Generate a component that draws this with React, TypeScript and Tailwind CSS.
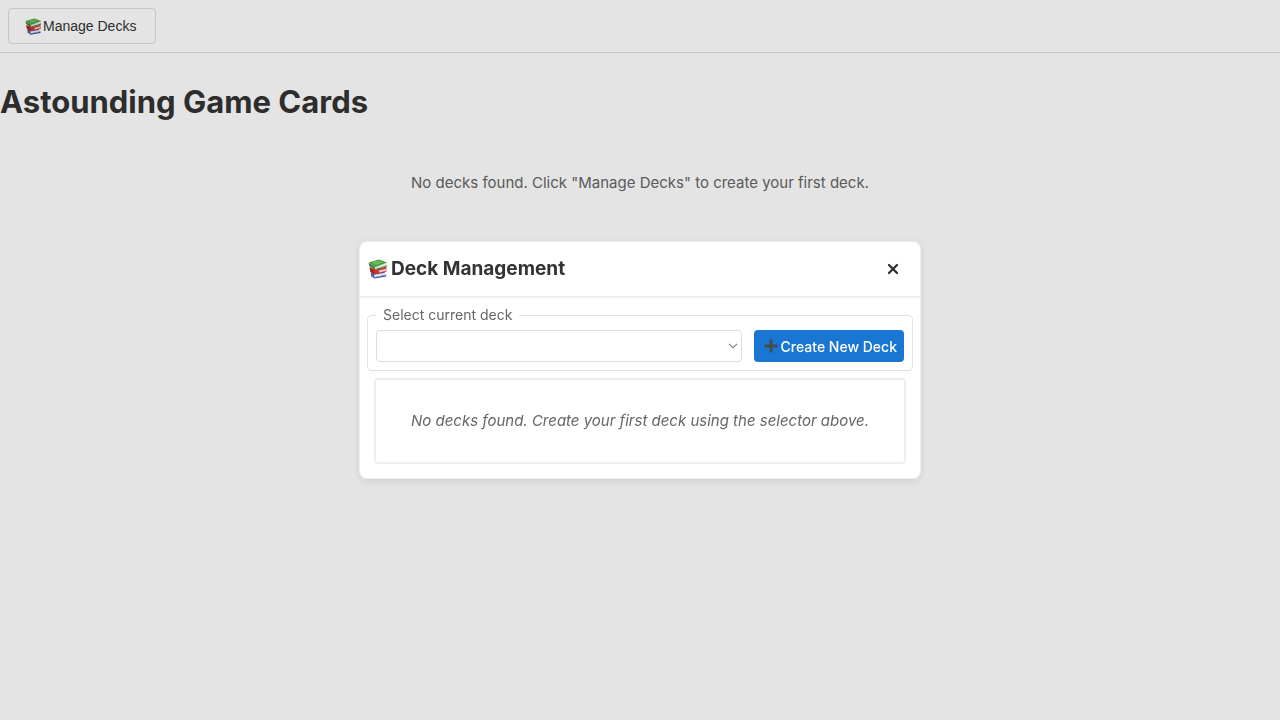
type IconProps = { className?: string };

function BooksIcon({ className }: IconProps) {
  return (
    <svg viewBox="0 0 20 20" className={className} aria-hidden="true">
      <path d="M2.6 13.4 L16 12.6 L18.2 16 L6.4 18.6 L3.2 16.6 Z" fill="#4a62a8" />
      <path d="M6 15.8 L17.8 13.8 L18.2 15.6 L6.6 18.2 Z" fill="#e4e4ea" />
      <path d="M3 16 L6.4 18.4 L18.2 16.2 L18.3 17.5 L6.5 19.6 L3 17.2 Z" fill="#3b5299" />
      <path d="M1.6 8.2 L8 10.4 L18.2 7.8 L18.6 12.6 L6.4 15.2 L2.2 12.6 Z" fill="#d5302a" />
      <path d="M1.6 8.6 L6 11.4 L6.4 15.2 L2.4 12.8 Z" fill="#a32622" />
      <path d="M11 11.4 L18 9.8 L18.3 11.8 L11.2 13.4 Z" fill="#dfcdd2" />
      <path d="M0.6 3.8 L6.8 8 L7.2 11 L1.4 7.2 Z" fill="#3c7a37" />
      <path d="M7 8 L18.8 4 L18.8 7 L7.4 10.6 Z" fill="#dfe5d8" />
      <path d="M0.6 3.6 L11 0.6 L19.2 3.6 L7.2 8.2 Z" fill="#4a9e40" />
      <path d="M3.6 3.6 L11 1.5 L15.6 3.2 L8 6 Z" fill="#6dba5e" />
      <path d="M7.2 10 L19 6.6 L19 7.5 L7.3 11 Z" fill="#377d33" />
    </svg>
  );
}

function PlusIcon({ className }: IconProps) {
  return (
    <svg viewBox="0 0 14 14" className={className} aria-hidden="true">
      <path d="M5.6 0.5 H8.4 V5.6 H13.5 V8.4 H8.4 V13.5 H5.6 V8.4 H0.5 V5.6 H5.6 Z" fill="#464a4e" />
    </svg>
  );
}

function CloseIcon({ className }: IconProps) {
  return (
    <svg viewBox="0 0 12 12" className={className} aria-hidden="true">
      <path d="M2 2 L10 10 M10 2 L2 10" stroke="#2f2f2f" strokeWidth="2.3" strokeLinecap="round" />
    </svg>
  );
}

function ChevronIcon({ className }: IconProps) {
  return (
    <svg viewBox="0 0 10 6" className={className} aria-hidden="true">
      <path d="M1 0.8 L5 4.8 L9 0.8" fill="none" stroke="#777777" strokeWidth="1.1" />
    </svg>
  );
}

function DeckDialog() {
  return (
    <div className="fixed inset-0 flex items-center justify-center bg-black/10">
      <div
        role="dialog"
        aria-labelledby="dialog-title"
        className="w-full max-w-[562px] rounded-lg border border-[#eeeeee] bg-white shadow-[0_2px_10px_rgba(0,0,0,0.1)]"
      >
        <header className="flex items-center justify-between border-b-2 border-[#eeeeee] py-[11px] pr-[11px] pl-2">
          <h2 id="dialog-title" className="flex items-center gap-[3px] text-[19px] leading-8 font-bold text-[#333333]">
            <BooksIcon className="size-5" />
            Deck Management
          </h2>
          <button type="button" aria-label="Close" className="flex size-8 items-center justify-center rounded">
            <CloseIcon className="size-3" />
          </button>
        </header>
        <div className="px-[7px] pt-[7px] pb-[14px]">
          <fieldset className="rounded border border-[#e2e2e2] px-2 pb-2">
            <legend className="px-[7px] text-[14px] leading-5 text-[#666666]">
              <label htmlFor="deck">Select current deck</label>
            </legend>
            <div className="flex gap-3 pt-[5px]">
              <div className="relative flex-1">
                <select id="deck" className="block h-8 w-full appearance-none rounded border border-[#dddddd] bg-white px-2 text-sm" />
                <ChevronIcon className="pointer-events-none absolute top-[13px] right-1 h-[6px] w-[10px]" />
              </div>
              <button
                type="button"
                className="flex h-8 items-center gap-[3px] rounded bg-[#1976d2] pr-[7px] pl-[10px] text-[14px] font-medium text-white"
              >
                <PlusIcon className="size-[14px]" />
                Create New Deck
              </button>
            </div>
          </fieldset>
          <div className="mx-[7px] mt-[7px] rounded border-2 border-[#eeeeee] px-4 py-[29px]">
            <p className="text-center text-[15px] leading-6 whitespace-nowrap text-[#666666] italic">
              No decks found. Create your first deck using the selector above.
            </p>
          </div>
        </div>
      </div>
    </div>
  );
}

export default function App() {
  return (
    <div className="min-h-screen bg-[#fefefe] font-[Inter,sans-serif]">
      <nav className="border-b border-[#dddddd] p-2">
        <button
          type="button"
          className="flex h-9 min-w-[148px] items-center gap-px rounded border border-[#dddddd] px-4 font-['Liberation_Sans',sans-serif] text-[14px] text-[#333333]"
        >
          <BooksIcon className="size-[17px]" />
          Manage Decks
        </button>
      </nav>
      <main>
        <h1 className="pt-[29px] text-[31px] leading-10 font-bold text-[#333333]">Astounding Game Cards</h1>
        <p className="pt-[49px] text-center text-[15px] leading-6 text-[#666666]">
          No decks found. Click "Manage Decks" to create your first deck.
        </p>
      </main>
      <DeckDialog />
    </div>
  );
}
